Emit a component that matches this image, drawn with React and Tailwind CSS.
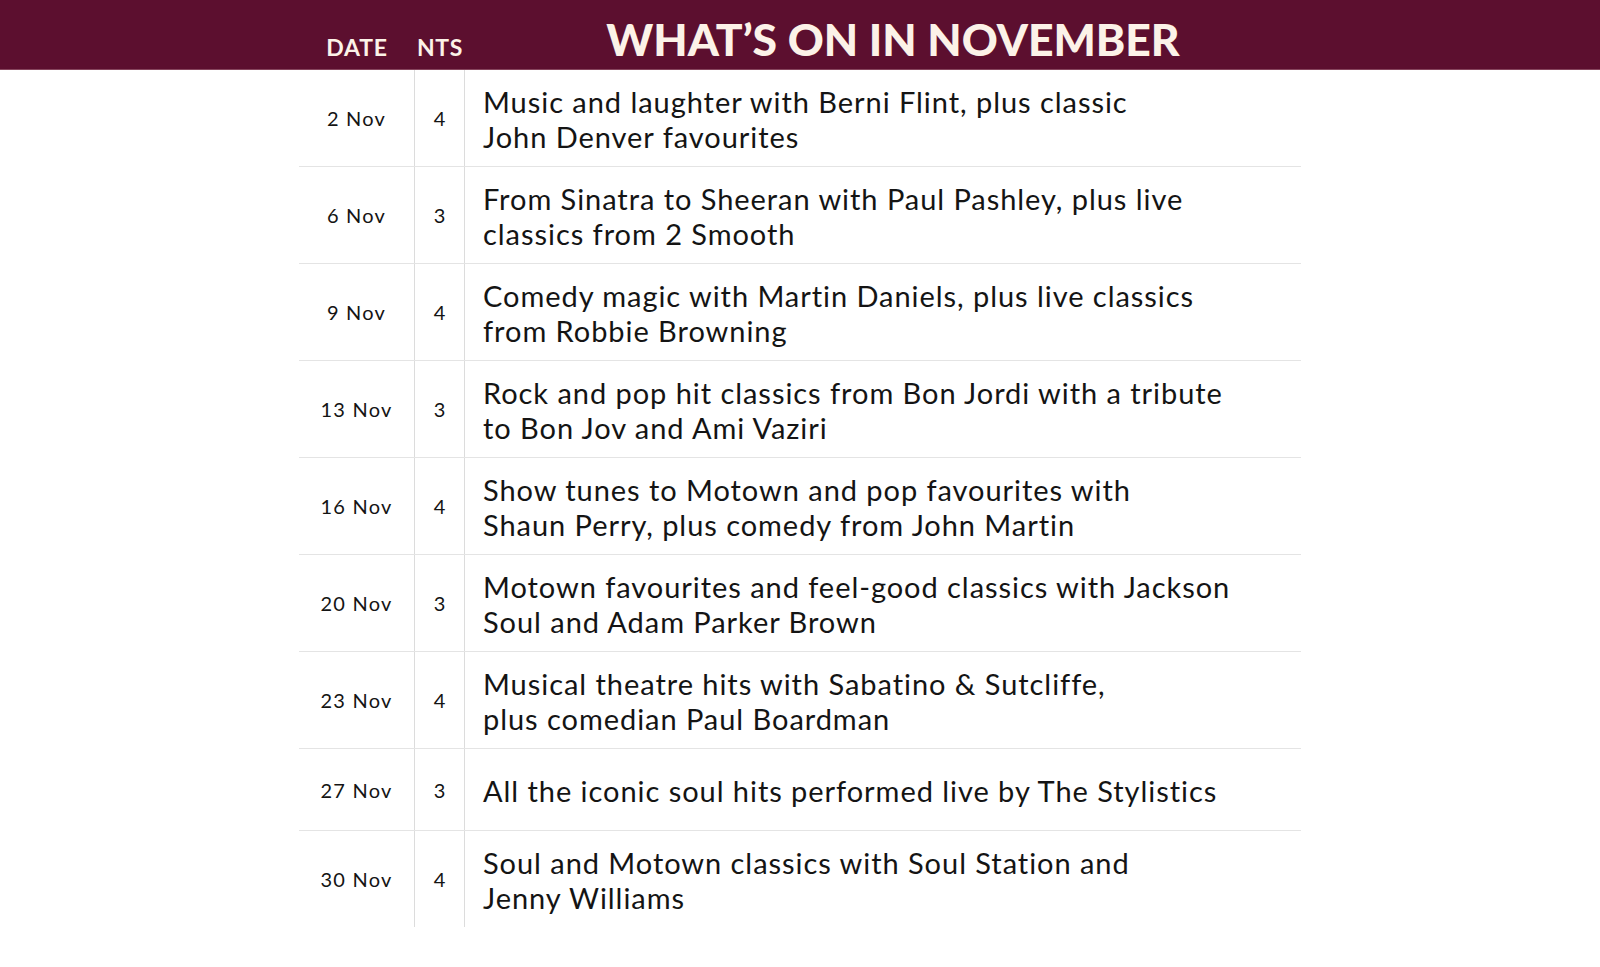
const events = [
  { date: '2 Nov', nts: 4, lines: ['Music and laughter with Berni Flint, plus classic', 'John Denver favourites'] },
  { date: '6 Nov', nts: 3, lines: ['From Sinatra to Sheeran with Paul Pashley, plus live', 'classics from 2 Smooth'] },
  { date: '9 Nov', nts: 4, lines: ['Comedy magic with Martin Daniels, plus live classics', 'from Robbie Browning'] },
  { date: '13 Nov', nts: 3, lines: ['Rock and pop hit classics from Bon Jordi with a tribute', 'to Bon Jov and Ami Vaziri'] },
  { date: '16 Nov', nts: 4, lines: ['Show tunes to Motown and pop favourites with', 'Shaun Perry, plus comedy from John Martin'] },
  { date: '20 Nov', nts: 3, lines: ['Motown favourites and feel-good classics with Jackson', 'Soul and Adam Parker Brown'] },
  { date: '23 Nov', nts: 4, lines: ['Musical theatre hits with Sabatino & Sutcliffe,', 'plus comedian Paul Boardman'] },
  { date: '27 Nov', nts: 3, lines: ['All the iconic soul hits performed live by The Stylistics'] },
  { date: '30 Nov', nts: 4, lines: ['Soul and Motown classics with Soul Station and', 'Jenny Williams'] },
]

export default function App() {
  return (
    <div className="w-[1600px] h-[967px] bg-white font-['Lato',sans-serif] text-[#141414] overflow-hidden">
      {/* maroon title bar, labels line up with the table columns below */}
      <header className="h-[70px] bg-[#5c0f2f] border-b border-[#86455d] flex items-end pb-[8px]">
        <div className="ml-[299px] w-[1002px] flex items-baseline text-[#fcf2e8] font-bold">
          <div className="w-[116px] text-center text-[23px] leading-none tracking-[0.8px]">DATE</div>
          <div className="w-[50px] text-center text-[23px] leading-none tracking-[0.6px]">NTS</div>
          <h1 className="flex-1 text-center pl-[20px] text-[44.5px] leading-none font-black">
            WHAT’S ON IN NOVEMBER
          </h1>
        </div>
      </header>

      <div className="ml-[299px] w-[1002px]">
        {events.map((ev, i) => {
          const single = ev.lines.length === 1
          const last = i === events.length - 1
          return (
            <div
              key={ev.date}
              className={`flex ${single ? 'h-[82px]' : last ? 'h-[96px]' : 'h-[97px]'} ${last ? '' : 'border-b border-[#e4e4e4]'}`}
            >
              <div className="w-[116px] flex items-center justify-center text-[20px] tracking-[1.2px] border-r border-[#dcdcdc]">
                {ev.date}
              </div>
              <div className="w-[50px] flex items-center justify-center text-[20px] border-r border-[#dcdcdc]">
                {ev.nts}
              </div>
              <div className="flex-1 flex flex-col justify-center pl-[18px] pt-[1px] text-[29px] leading-[35px] tracking-[0.95px]">
                {ev.lines.map((l) => (
                  <span key={l}>{l}</span>
                ))}
              </div>
            </div>
          )
        })}
      </div>
    </div>
  )
}
